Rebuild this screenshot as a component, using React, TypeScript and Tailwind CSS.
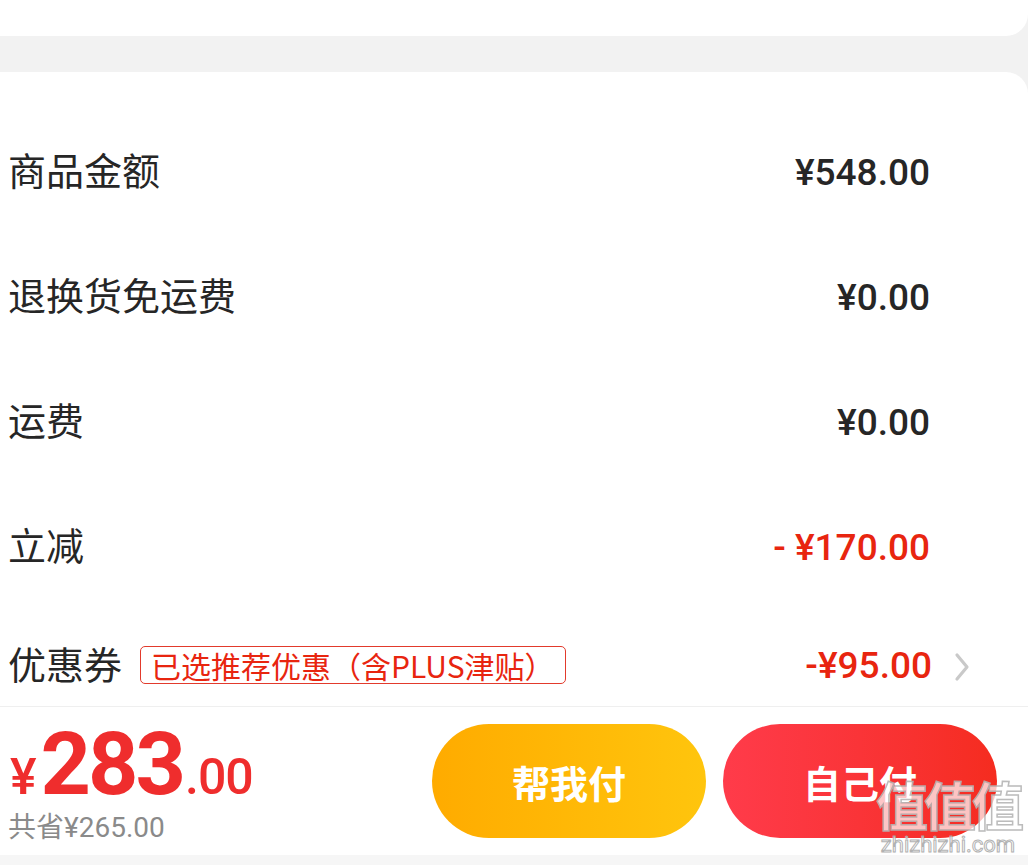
import React from "react";

// ─── Types ────────────────────────────────────────────────────────────────────

type Row = {
  label: string;
  value: string;
  red?: boolean;
};

const ROWS: Row[] = [
  { label: "商品金额", value: "¥548.00" },
  { label: "退换货免运费", value: "¥0.00" },
  { label: "运费", value: "¥0.00" },
  { label: "立减", value: "- ¥170.00", red: true },
];

const FONT = "font-['Roboto','Noto_Sans_CJK_SC',sans-serif]";
const CJK = "font-['Noto_Sans_CJK_SC','Noto_Sans',sans-serif]";

// ─── Pieces ───────────────────────────────────────────────────────────────────

const Chevron = () => (
  <svg width="16" height="30" viewBox="0 0 16 30" className="ml-[22px] mt-[4px]">
    <polyline
      points="3,3 13,15 3,27"
      fill="none"
      stroke="#c9c9c9"
      strokeWidth="3.2"
      strokeLinecap="round"
      strokeLinejoin="round"
    />
  </svg>
);

const FeeRow = ({ row }: { row: Row }) => (
  <div className="flex h-[125px] shrink-0 items-center justify-between pl-[8px] pr-[98px]">
    <span className={`${CJK} mb-[7px] text-[38px] leading-none text-[#262626]`}>{row.label}</span>
    <span
      className={`${FONT} text-[37px] font-medium leading-none whitespace-pre ${
        row.red ? "text-[#e8250f]" : "text-[#262626]"
      }`}
    >
      {row.value}
    </span>
  </div>
);

// ─── App ──────────────────────────────────────────────────────────────────────

export default function App() {
  return (
    <div className="relative flex h-[865px] w-[1028px] flex-col overflow-hidden bg-[#f2f2f2]">
      {/* previous card */}
      <div className="h-[36px] shrink-0 rounded-br-[22px] bg-white" />
      <div className="h-[36px] shrink-0" />

      {/* fee card */}
      <div className="flex h-[634px] shrink-0 flex-col overflow-hidden rounded-tr-[22px] bg-white pt-[38px]">
        {ROWS.map(row => (
          <FeeRow key={row.label} row={row} />
        ))}
        <div className="flex h-[110px] shrink-0 items-center justify-between pl-[8px] pr-[58px]">
          <div className="flex items-center">
            <span className={`${CJK} mb-[4px] text-[38px] leading-none text-[#262626]`}>优惠券</span>
            <span
              className={`${CJK} ml-[18px] flex h-[38px] items-center rounded-[5px] border border-[#e23a2c] px-[10px] text-[30px] leading-none text-[#e8250f]`}
            >
              已选推荐优惠（含PLUS津贴）
            </span>
          </div>
          <div className="flex items-center">
            <span className={`${FONT} text-[37px] font-medium leading-none text-[#e8250f]`}>-¥95.00</span>
            <Chevron />
          </div>
        </div>
      </div>

      {/* bottom bar */}
      <div className="flex h-[149px] shrink-0 items-center justify-between border-t border-[#efefef] bg-white pl-[8px] pr-[31px]">
        <div className="flex flex-col">
          <div className={`${FONT} flex items-baseline leading-none text-[#ef2d2d]`}>
            <span className="ml-[2px] text-[50px] font-medium">¥</span>
            <span className="ml-[4px] text-[88px] font-bold tracking-[-3px]">283</span>
            <span className="ml-[2px] text-[50px] font-medium tracking-[-1px]">.00</span>
          </div>
          <span className={`${FONT} mt-[6px] text-[28px] leading-none text-[#8a8a8a]`}>共省¥265.00</span>
        </div>

        <div className="flex gap-[17px]">
          <button
            className={`${CJK} flex h-[114px] w-[274px] items-center justify-center rounded-full bg-gradient-to-r from-[#ffab00] to-[#ffc50d] text-[38px] font-bold text-white`}
          >
            帮我付
          </button>
          <button
            className={`${CJK} flex h-[114px] w-[274px] items-center justify-center rounded-full bg-gradient-to-r from-[#ff3b4a] to-[#f52c1f] text-[38px] font-bold text-white`}
          >
            自己付
          </button>
        </div>
      </div>
      <div className="flex-1 bg-[#f6f6f6]" />

      {/* watermark */}
      <div className="absolute left-[876px] top-[778px] flex flex-col items-center opacity-90">
        <span
          className={`${CJK} text-[52px] font-bold leading-none tracking-[-4px] text-white/80 [-webkit-text-stroke:1.5px_#b5b5b5]`}
        >
          值值值
        </span>
        <span className={`${FONT} mt-[4px] text-[22px] leading-none text-white/80 [-webkit-text-stroke:1px_#aaaaaa]`}>
          zhizhizhi.com
        </span>
      </div>
    </div>
  );
}
